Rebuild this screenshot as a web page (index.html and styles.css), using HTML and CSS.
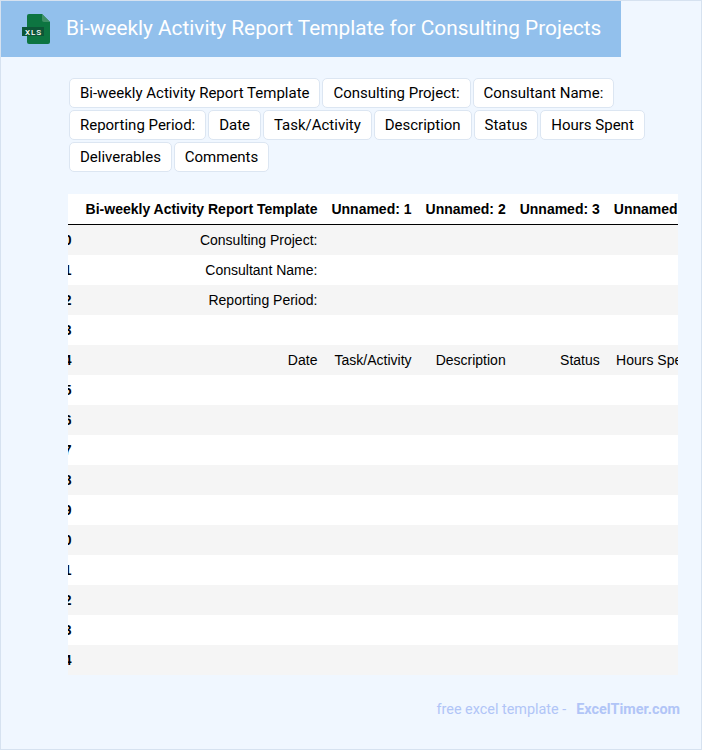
FILE: index.html
```html
<!DOCTYPE html>
<html lang="en">
<head>
<meta charset="utf-8">
<title>Bi-weekly Activity Report Template for Consulting Projects</title>
<link rel="stylesheet" href="styles.css">
</head>
<body>
<div class="page">
  <header class="banner">
    <svg class="logo" width="30" height="32" viewBox="0 0 30 32" aria-hidden="true">
      <path class="logo-doc" d="M6 3a2 2 0 0 1 2-2h13l8 8v20a2 2 0 0 1-2 2H8a2 2 0 0 1-2-2z"/>
      <path class="logo-fold" d="M21 1l8 8h-6a2 2 0 0 1-2-2z"/>
      <rect class="logo-band" x="1" y="14" width="22" height="9"/>
      <text class="logo-text" x="12.500" y="21.500" text-anchor="middle">XLS</text>
    </svg>
    <h1 class="title">Bi-weekly Activity Report Template for Consulting Projects</h1>
  </header>

  <div class="tags">
    <span class="tag">Bi-weekly Activity Report Template</span>
    <span class="tag">Consulting Project:</span>
    <span class="tag">Consultant Name:</span>
    <span class="tag">Reporting Period:</span>
    <span class="tag">Date</span>
    <span class="tag">Task/Activity</span>
    <span class="tag">Description</span>
    <span class="tag">Status</span>
    <span class="tag">Hours Spent</span>
    <span class="tag">Deliverables</span>
    <span class="tag">Comments</span>
  </div>

  <div class="table-wrap">
    <table class="data">
      <thead>
        <tr><th class="idx"></th><th>Bi-weekly Activity Report Template</th><th>Unnamed: 1</th><th>Unnamed: 2</th><th>Unnamed: 3</th><th>Unnamed: 4</th></tr>
      </thead>
      <tbody>
        <tr><th class="idx">0</th><td>Consulting Project:</td><td></td><td></td><td></td><td></td></tr>
        <tr><th class="idx">1</th><td>Consultant Name:</td><td></td><td></td><td></td><td></td></tr>
        <tr><th class="idx">2</th><td>Reporting Period:</td><td></td><td></td><td></td><td></td></tr>
        <tr><th class="idx">3</th><td></td><td></td><td></td><td></td><td></td></tr>
        <tr><th class="idx">4</th><td>Date</td><td>Task/Activity</td><td>Description</td><td>Status</td><td>Hours Spent</td></tr>
        <tr><th class="idx">5</th><td></td><td></td><td></td><td></td><td></td></tr>
        <tr><th class="idx">6</th><td></td><td></td><td></td><td></td><td></td></tr>
        <tr><th class="idx">7</th><td></td><td></td><td></td><td></td><td></td></tr>
        <tr><th class="idx">8</th><td></td><td></td><td></td><td></td><td></td></tr>
        <tr><th class="idx">9</th><td></td><td></td><td></td><td></td><td></td></tr>
        <tr><th class="idx">10</th><td></td><td></td><td></td><td></td><td></td></tr>
        <tr><th class="idx">11</th><td></td><td></td><td></td><td></td><td></td></tr>
        <tr><th class="idx">12</th><td></td><td></td><td></td><td></td><td></td></tr>
        <tr><th class="idx">13</th><td></td><td></td><td></td><td></td><td></td></tr>
        <tr><th class="idx">14</th><td></td><td></td><td></td><td></td><td></td></tr>
      </tbody>
    </table>
  </div>

  <footer class="foot">
    <span>free excel template -</span>
    <strong class="foot-brand">ExcelTimer.com</strong>
  </footer>
</div>
</body>
</html>
```

FILE: styles.css
```css
* { box-sizing: border-box; }

html, body {
  margin: 0;
  padding: 0;
}

body {
  width: 702px;
  height: 750px;
  overflow: hidden;
  font-family: Roboto, sans-serif;
}

.page {
  width: 702px;
  height: 750px;
  background: #f0f7ff;
  border: 1px solid #d6e2f0;
  display: flex;
  flex-direction: column;
}

.banner {
  width: 620px;
  height: 56px;
  flex: none;
  background: #92c0ec;
  display: flex;
  align-items: center;
  padding-left: 20px;
  gap: 15px;
}

.logo { flex: none; }
.logo-doc { fill: #0d7541; }
.logo-fold { fill: #3f9066; }
.logo-band { fill: #0d5637; }
.logo-text {
  fill: #ffffff;
  font-family: Roboto, sans-serif;
  font-size: 8px;
  font-weight: 500;
  letter-spacing: 1px;
}

.title {
  margin: 0 0 2px;
  color: #ffffff;
  font-size: 20.8px;
  font-weight: 400;
  white-space: nowrap;
}

.tags {
  margin: 21px 0 0 68px;
  width: 600px;
  display: flex;
  flex-wrap: wrap;
  gap: 2px;
}

.tag {
  height: 30px;
  padding: 0 9.95px;
  background: #ffffff;
  border: 1px solid #dce6f2;
  border-radius: 5px;
  color: #000000;
  font-size: 15px;
  line-height: 28px;
  white-space: nowrap;
}

.table-wrap {
  margin: 22px 0 0 67px;
  width: 610px;
  height: 481px;
  overflow: hidden;
  background: #ffffff;
  flex: none;
}

.data {
  margin-left: -19px;
  border-collapse: separate;
  border-spacing: 0;
  font-family: "Liberation Sans", sans-serif;
  font-size: 14px;
  color: #000000;
  white-space: nowrap;
}

.data thead th {
  height: 31px;
  border-bottom: 1px solid #000000;
}

.data tbody tr { height: 30px; }
.data tbody tr:nth-child(odd) { background: #f5f5f5; }

.data th,
.data td {
  padding: 0 7px;
  text-align: right;
}

.data th { font-weight: 700; }

.foot {
  margin: 26px 21px 0 0;
  display: flex;
  justify-content: flex-end;
  gap: 10px;
  color: #b1c5f7;
  font-size: 14.4px;
}

.foot-brand { font-weight: 700; }
```
